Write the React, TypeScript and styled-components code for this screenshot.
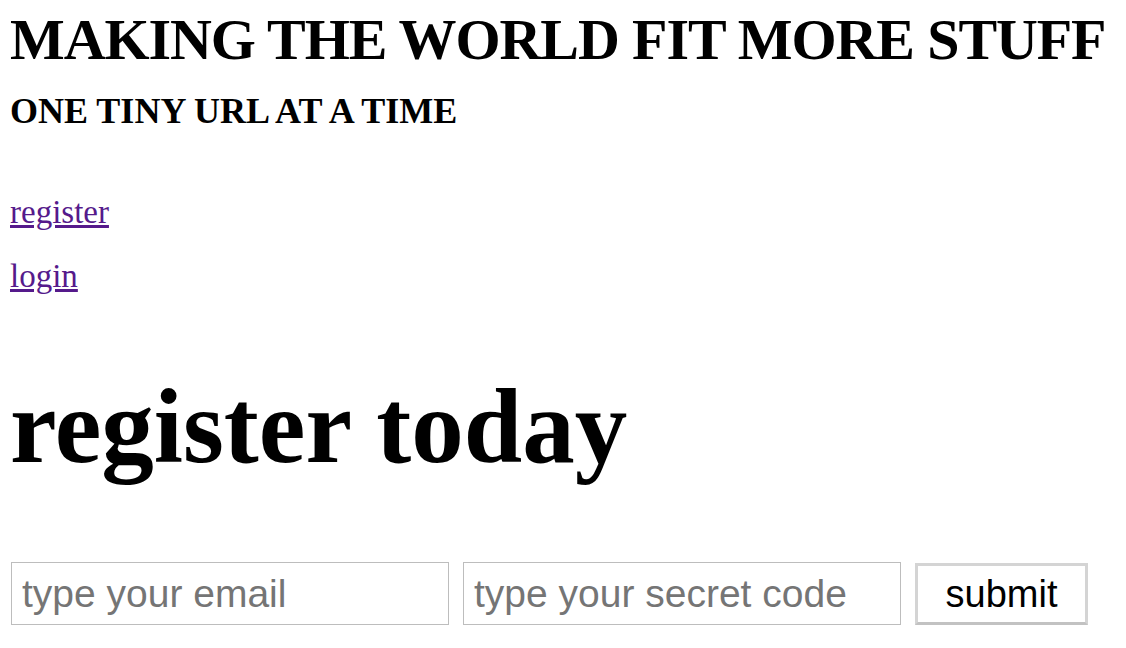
import React from "react";
import styled, { createGlobalStyle } from "styled-components";

const Global = createGlobalStyle`
  html, body { margin: 0; padding: 0; background: #fff; }
  body { font-family: "Liberation Serif", "Times New Roman", serif; color: #000; }
`;

const Page = styled.div`
  padding: 7px 10px 0 10px;
`;

const Title = styled.h1`
  margin: 0;
  font-size: 58px;
  line-height: 66px;
  letter-spacing: -1.1px;
  font-weight: bold;
  white-space: nowrap;
`;

const Subtitle = styled.h3`
  margin: 18px 0 0 0;
  font-size: 36px;
  line-height: 40px;
  font-weight: bold;
`;

const Nav = styled.nav`
  margin-top: 61px;
  display: flex;
  flex-direction: column;
  gap: 24px;
`;

const NavLink = styled.a`
  font-size: 33px;
  line-height: 40px;
  color: #551a8b;
  text-decoration: underline;
  align-self: flex-start;
`;

const Heading = styled.h1`
  margin: 72px 0 0 0;
  font-size: 105px;
  line-height: 118px;
  font-weight: bold;
`;

const Form = styled.form`
  margin-top: 76px;
  padding-left: 1px;
  display: flex;
  align-items: flex-start;
  gap: 14px;
`;

const Field = styled.input`
  box-sizing: border-box;
  width: 438px;
  height: 63px;
  border: 1px solid #bdbdbd;
  padding: 0 10px;
  font-family: "Liberation Sans", Arial, sans-serif;
  font-size: 39px;
  color: #000;
  background: #fff;
  outline: none;
  &::placeholder { color: #757575; }
`;

const Submit = styled.button`
  box-sizing: border-box;
  margin-top: 1px;
  width: 173px;
  height: 62px;
  border: 3px solid #d4d4d4;
  border-bottom-color: #c2c2c2;
  background: #fff;
  font-family: "Liberation Sans", Arial, sans-serif;
  font-size: 38px;
  color: #000;
  padding: 0;
`;

export default function App() {
  return (
    <>
      <Global />
      <Page>
        <Title>MAKING THE WORLD FIT MORE STUFF</Title>
        <Subtitle>ONE TINY URL AT A TIME</Subtitle>
        <Nav>
          <NavLink href="#">register</NavLink>
          <NavLink href="#">login</NavLink>
        </Nav>
        <Heading>register today</Heading>
        <Form onSubmit={(e) => e.preventDefault()}>
          <Field type="email" placeholder="type your email" />
          <Field type="password" placeholder="type your secret code" />
          <Submit type="submit">submit</Submit>
        </Form>
      </Page>
    </>
  );
}
